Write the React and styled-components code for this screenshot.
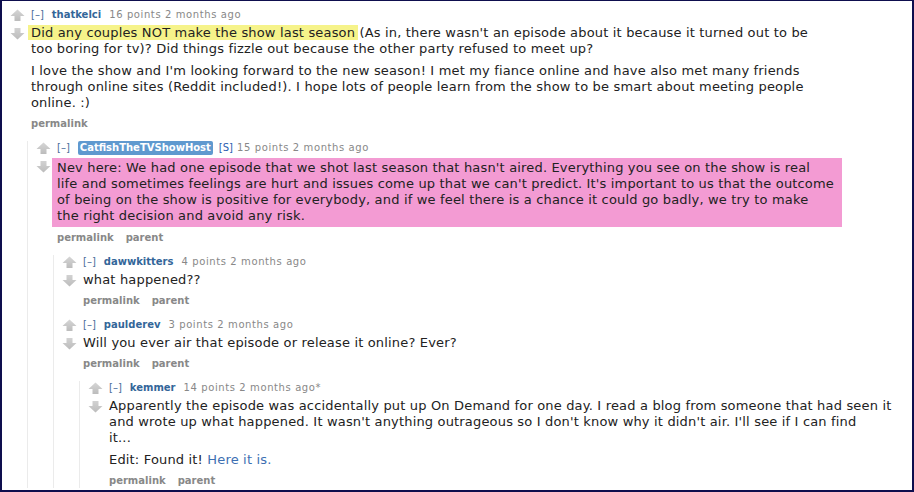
import React from 'react';
import styled, { createGlobalStyle } from 'styled-components';

const GlobalStyle = createGlobalStyle`
  html, body {
    margin: 0;
    padding: 0;
    background: #fff;
  }
  body {
    font-family: "DejaVu Sans", Verdana, sans-serif;
  }
`;

const Frame = styled.div`
  width: 914px;
  height: 492px;
  box-sizing: border-box;
  border: 2px solid #0e0e4e;
  border-top-width: 1px;
  padding-top: 7px;
  overflow: hidden;
  background: #fff;
`;

const CommentBlock = styled.div`
  padding-left: 8px;
`;

const Children = styled.div`
  margin: 10px 0 0 17px;
  border-left: 1px solid #ebebeb;
  display: flex;
  flex-direction: column;
  gap: 10px;
`;

const Row = styled.div`
  display: flex;
  align-items: flex-start;
`;

const Votes = styled.div`
  flex-shrink: 0;
  width: 15px;
  margin-right: 6px;
  padding-top: 1px;
  display: flex;
  flex-direction: column;
  gap: 7px;
`;

const Entry = styled.div`
  flex: 1;
  min-width: 0;
`;

const Tagline = styled.div`
  font-size: 10px;
  line-height: 14px;
  color: #888;
  white-space: nowrap;
  display: flex;
  align-items: baseline;
`;

const Expand = styled.span`
  color: #4a6c9b;
  margin-right: 8px;
`;

const Author = styled.span`
  font-weight: bold;
  color: ${p => (p.$submitter ? '#fff' : '#369')};
  background: ${p => (p.$submitter ? '#5f99cf' : 'transparent')};
  padding: ${p => (p.$submitter ? '0 2px' : '0')};
  border-radius: 2px;
  margin-right: ${p => (p.$submitter ? '6px' : '8px')};
`;

const Flair = styled.span`
  color: #2a5db0;
  margin-right: 4px;
`;

const Score = styled.span`
  color: #888;
  letter-spacing: 0.6px;
`;

// text column is 780px wide; the pink "distinguished" box spans 790px
const Body = styled.div`
  margin-top: 3px;
  max-width: ${p => p.$measure}px;
  font-size: 13px;
  letter-spacing: 0.17px;
  line-height: 16px;
  color: #222;
  background: ${p => (p.$pink ? '#f39bd3' : 'transparent')};
  padding: ${p => (p.$pink ? `2px ${785 - p.$measure}px 3px 5px` : '0')};
  margin-left: ${p => (p.$pink ? '-5px' : '0')};
  margin-bottom: ${p => (p.$pink ? '-2px' : '0')};

  p {
    margin: 0 0 6px;
  }
  p:last-child {
    margin-bottom: 0;
  }
`;

const Highlight = styled.span`
  background: #f6f38a;
  box-shadow: -3px 0 0 #f6f38a, 3px 0 0 #f6f38a;
`;

const Link = styled.a`
  color: #3d6fb2;
  text-decoration: none;
`;

const Links = styled.div`
  margin-top: 6px;
  display: flex;
  gap: 12px;
  font-size: 10px;
  line-height: 14px;
  font-weight: bold;
  color: #888;
`;

function Arrow({ down }) {
  const id = down ? 'arrow-down' : 'arrow-up';
  return (
    <svg width="15" height="12" viewBox="0 0 15 12" style={down ? { transform: 'rotate(180deg)' } : undefined}>
      <defs>
        <linearGradient id={id} x1="0" y1="0" x2="0" y2="1">
          <stop offset="0" stopColor={down ? '#bcbcbc' : '#d6d6d6'} />
          <stop offset="1" stopColor={down ? '#d2d2d2' : '#bcbcbc'} />
        </linearGradient>
      </defs>
      <path d="M7.5 0.5 L14.5 7 L10.5 7 L10.5 12 L4.5 12 L4.5 7 L0.5 7 Z" fill={`url(#${id})`} />
    </svg>
  );
}

function Comment({ c }) {
  return (
    <CommentBlock>
      <Row>
        <Votes>
          <Arrow />
          <Arrow down />
        </Votes>
        <Entry>
          <Tagline>
            <Expand>[–]</Expand>
            <Author $submitter={c.submitter}>{c.author}</Author>
            {c.submitter && <Flair>[S]</Flair>}
            <Score>{c.score} {c.time}</Score>
          </Tagline>
          <Body $pink={c.pink} $measure={c.measure || 780}>{c.body}</Body>
          <Links>
            {c.links.map(l => (
              <span key={l}>{l}</span>
            ))}
          </Links>
        </Entry>
      </Row>
      {c.children && (
        <Children>
          {c.children.map(ch => (
            <Comment key={ch.author} c={ch} />
          ))}
        </Children>
      )}
    </CommentBlock>
  );
}

const thread = {
  author: 'thatkelci',
  score: '16 points',
  time: '2 months ago',
  links: ['permalink'],
  body: (
    <>
      <p>
        <Highlight>Did any couples NOT make the show last season</Highlight> (As in, there wasn't an episode
        about it because it turned out to be too boring for tv)? Did things fizzle out because the other party
        refused to meet up?
      </p>
      <p>
        I love the show and I'm looking forward to the new season! I met my fiance online and have also met many
        friends through online sites (Reddit included!). I hope lots of people learn from the show to be smart
        about meeting people online. :)
      </p>
    </>
  ),
  children: [
    {
      author: 'CatfishTheTVShowHost',
      submitter: true,
      pink: true,
      score: '15 points',
      time: '2 months ago',
      links: ['permalink', 'parent'],
      body: (
        <p>
          Nev here: We had one episode that we shot last season that hasn't aired. Everything you see on the show
          is real
          <br />
          life and sometimes feelings are hurt and issues come up that we can't predict. It's important to us that
          the outcome of being on the show is positive for everybody, and if we feel there is a chance it could go
          badly, we try to make
          <br />
          the right decision and avoid any risk.
        </p>
      ),
      children: [
        {
          author: 'dawwkitters',
          score: '4 points',
          time: '2 months ago',
          links: ['permalink', 'parent'],
          body: <p>what happened??</p>,
        },
        {
          author: 'paulderev',
          score: '3 points',
          time: '2 months ago',
          links: ['permalink', 'parent'],
          body: <p>Will you ever air that episode or release it online? Ever?</p>,
          children: [
            {
              author: 'kemmer',
              score: '14 points',
              time: '2 months ago*',
              measure: 790,
              links: ['permalink', 'parent'],
              body: (
                <>
                  <p>
                    Apparently the episode was accidentally put up On Demand for one day. I read a blog from
                    someone that had seen it and wrote up what happened. It wasn't anything outrageous so I don't
                    know why it didn't air. I'll see if I can find
                    <br />
                    it...
                  </p>
                  <p>
                    Edit: Found it! <Link href="#">Here it is.</Link>
                  </p>
                </>
              ),
            },
          ],
        },
      ],
    },
  ],
};

export default function App() {
  return (
    <>
      <GlobalStyle />
      <Frame>
        <Comment c={thread} />
      </Frame>
    </>
  );
}
